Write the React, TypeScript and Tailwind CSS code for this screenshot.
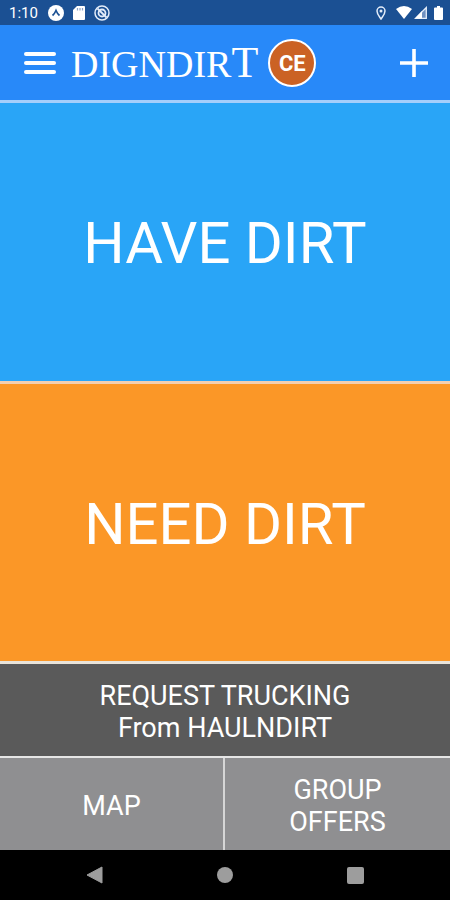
const StatusBar = () => {
    return (
        <div className="flex h-[25px] items-center justify-between bg-[#1b5093] pl-[9px] pr-[7px] text-white">
            <div className="flex items-center">
                <span className="w-[39px] text-[15px] leading-5">1:10</span>
                <svg className="h-4 w-4" viewBox="0 0 16 16">
                    <circle cx="8" cy="8" r="8" fill="#fff" />
                    <path d="M4.5 10.5Q6.5 9 8 5.5Q9.500 9 11.500 10.500" fill="none" stroke="#1b5093" strokeWidth="1.700" />
                </svg>
                <svg className="ml-[9px] h-[14px] w-[12px]" viewBox="0 0 12 14">
                    <path d="M4 0H11Q12 0 12 1V13Q12 14 11 14H1Q0 14 0 13V4Z" fill="#fff" />
                    <path d="M4.500 2V4.500M7 2V4.500M9.500 2V4.500" stroke="#8ca3c8" strokeWidth="1.200" />
                </svg>
                <svg className="ml-[9px] h-4 w-4" viewBox="0 0 16 16" fill="none" stroke="#e4edfa">
                    <circle cx="8" cy="8" r="7" strokeWidth="1.500" />
                    <circle cx="8" cy="8" r="3.500" strokeWidth="1.800" />
                    <path d="M3.500 3.500L12.500 12.500" strokeWidth="1.800" />
                </svg>
            </div>
            <div className="flex items-center">
                <svg className="h-[14px] w-[10px]" viewBox="0 0 10 14" fill="none" stroke="#e4edfa">
                    <path d="M5 13C3 10 1 8 1 5A4 4 0 0 1 9 5C9 8 7 10 5 13Z" strokeWidth="1.500" />
                    <circle cx="5" cy="5" r="1.500" fill="#e4edfa" stroke="none" />
                </svg>
                <svg className="ml-[10px] h-[13px] w-4" viewBox="0 0 16 13">
                    <path d="M0 3Q8-3 16 3L8 13Z" fill="#fff" />
                </svg>
                <svg className="ml-[2px] h-[13px] w-[13px]" viewBox="0 0 13 13">
                    <path d="M12.300 1.500V12.300H1.500Z" fill="#6f90c0" stroke="#e4edfa" strokeWidth="1.300" />
                    <path d="M8 5V12.500H1Z" fill="#fff" />
                </svg>
                <svg className="ml-[7px] h-[14px] w-[9px]" viewBox="0 0 9 14">
                    <path d="M3 0H6V1.500H8Q9 1.500 9 2.500V13Q9 14 8 14H1Q0 14 0 13V2.500Q0 1.500 1 1.500H3Z" fill="#fff" />
                </svg>
            </div>
        </div>
    )
}

const Header = () => {
    return (
        <header className="flex h-[75px] items-center bg-[#2889f9] pl-6 pr-[22px] pt-px">
            <button type="button" aria-label="Menu" className="flex w-8 flex-col gap-[5px]">
                <span className="h-1 rounded-sm bg-white" />
                <span className="h-1 rounded-sm bg-white" />
                <span className="h-1 rounded-sm bg-white" />
            </button>
            <h1 className="ml-[15px] font-['Liberation_Serif',serif] text-[38px] leading-10 text-white">
                DIGNDIR<span className="text-[44px]">T</span>
            </h1>
            <button type="button" className="ml-[10px] h-12 w-12 shrink-0 rounded-full border-2 border-white bg-[#cb6224] text-[22px] font-bold text-white">CE</button>
            <button type="button" aria-label="Add" className="ml-auto">
                <svg className="h-7 w-7" viewBox="0 0 28 28">
                    <path d="M14 0V28M0 14H28" stroke="#fff" strokeWidth="3.600" />
                </svg>
            </button>
        </header>
    )
}

const NavBar = () => {
    return (
        <nav className="flex h-[50px] items-center justify-between bg-black px-[86px] text-[#9d9d9d]">
            <button type="button" aria-label="Back">
                <svg className="h-[18px] w-[17px]" viewBox="0 0 17 18">
                    <path d="M16 1V17L1 9Z" fill="currentColor" stroke="currentColor" strokeLinejoin="round" />
                </svg>
            </button>
            <button type="button" aria-label="Home" className="h-4 w-4 rounded-full bg-[#9d9d9d]" />
            <button type="button" aria-label="Recent apps" className="h-[17px] w-[17px] rounded-xs bg-[#9d9d9d]" />
        </nav>
    )
}

const App = () => {
    return (
        <div className="flex min-h-screen flex-col bg-black font-[Roboto,sans-serif]">
            <StatusBar />
            <Header />
            <main className="flex flex-1 flex-col text-white">
                <button type="button" className="flex-1 border-t-3 border-[#a4cefb] bg-[#29a5f7] pt-1 text-[58px]">HAVE DIRT</button>
                <button type="button" className="flex-1 border-t-3 border-[#f3cfb0] bg-[#fb9727] pt-1 text-[58px]">NEED DIRT</button>
                <button type="button" className="h-[95px] border-t-3 border-[#e9e4da] bg-[#5a5a5a] pt-1 text-[27px] leading-8">
                    REQUEST TRUCKING<br />From HAULNDIRT
                </button>
                <div className="grid h-[94px] grid-cols-2 border-t-2 border-[#e6e6e6] bg-[#8f8f91] text-[27px] leading-8">
                    <button type="button" className="border-r-2 border-[#d6d6d6] pt-1">MAP</button>
                    <button type="button" className="pt-1">GROUP<br />OFFERS</button>
                </div>
            </main>
            <NavBar />
        </div>
    )
}

export default App
